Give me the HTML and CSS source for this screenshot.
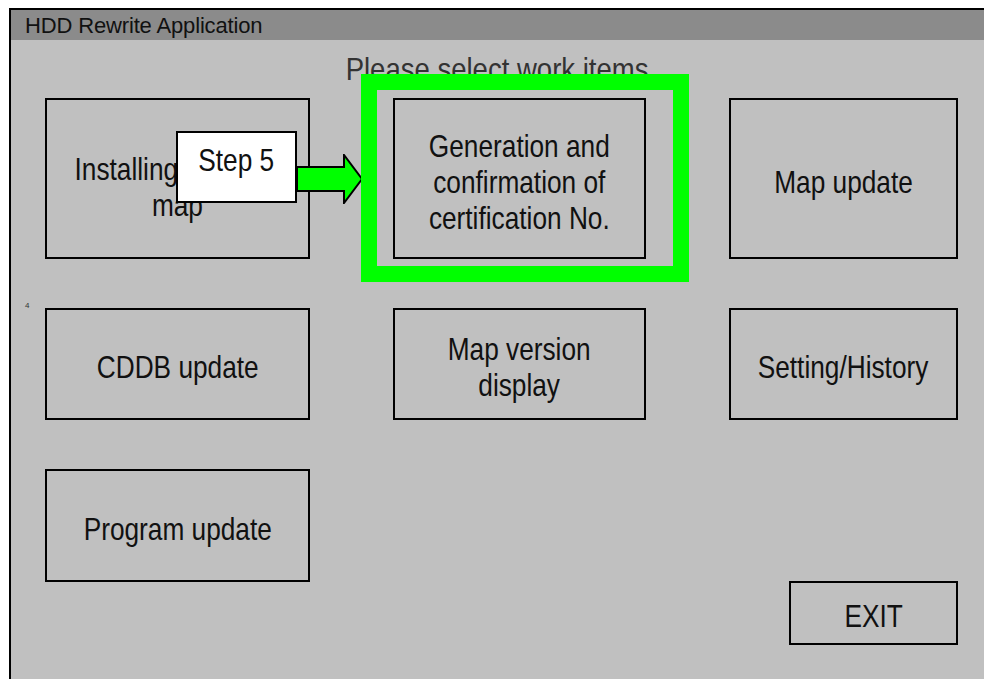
FILE: index.html
```html
<!DOCTYPE html>
<html lang="en">
<head>
  <meta charset="UTF-8">
  <title>HDD Rewrite Application</title>
  <link rel="stylesheet" href="styles.css">
</head>
<body>

<div class="window">
  <div class="title-bar">HDD Rewrite Application</div>

  <div class="content">
    <span class="page-no">4</span>
    <h1 class="prompt"><span class="narrow">Please select work items</span></h1>

    <div class="menu">
      <div class="item item-first">
        <span class="narrow">Installing updated<br>map</span>
        <!-- step callout -->
        <svg class="step-arrow" width="68" height="50" viewBox="0 0 68 50">
          <path d="M1 13 H48 V1 L66 25 L48 49 V37 H1 Z" fill="#00ff00" stroke="#000" stroke-width="2"/>
        </svg>
        <div class="step-label"><span class="narrow">Step 5</span></div>
      </div>
      <div class="item item-current"><span class="narrow">Generation and<br>confirmation of<br>certification No.</span></div>
      <div class="item"><span class="narrow">Map update</span></div>

      <div class="item"><span class="narrow">CDDB update</span></div>
      <div class="item"><span class="narrow">Map version<br>display</span></div>
      <div class="item"><span class="narrow">Setting/History</span></div>

      <div class="item"><span class="narrow">Program update</span></div>
    </div>

    <div class="footer">
      <div class="item exit"><span class="narrow">EXIT</span></div>
    </div>
  </div>
</div>

</body>
</html>
```

FILE: styles.css
```css
html, body { margin: 0; padding: 0; background: #fff; }
body {
  font-family: "Liberation Sans", Arial, sans-serif;
  color: #111;
  overflow: hidden;
}

/* the panel font is a condensed sans */
.narrow {
  display: inline-block;
  transform: scaleX(0.82);
  transform-origin: center;
  white-space: nowrap;
}

.window {
  margin: 8px 0 0 9px;
  border-top: 2px solid #000;
  border-left: 2px solid #000;
  background: #c0c0c0;
  height: 700px;
}

.title-bar {
  height: 30px;
  line-height: 31px;
  background: #8b8b8b;
  padding-left: 14px;
  font-size: 22px;
  letter-spacing: -0.15px;
  color: #111;
}

.content {
  position: relative;
  padding: 11px 0 0 34px;
}

.page-no {
  position: absolute;
  left: 14px;
  top: 261px;
  font-size: 8px;
  color: #333;
}

.prompt {
  margin: 0 0 11px -34px;
  height: 36px;
  line-height: 36px;
  font-size: 32px;
  font-weight: normal;
  text-align: center;
  color: #333;
}
.prompt .narrow { transform: scaleX(0.86); }

.menu {
  display: grid;
  grid-template-columns: 265px 253px 229px;
  grid-template-rows: 161px 112px 113px;
  column-gap: 83px;
  row-gap: 49px;
}

.item {
  position: relative;
  border: 2px solid #000;
  display: flex;
  align-items: center;
  justify-content: center;
  text-align: center;
  font-size: 32px;
  line-height: 36px;
  padding-top: 6px;
}

.item-first { padding-top: 16px; }

.item-current::after {
  content: "";
  position: absolute;
  left: -34px;
  top: -26px;
  right: -45px;
  bottom: -25px;
  border: 16px solid #00ff00;
}

.step-arrow {
  position: absolute;
  left: 249px;
  top: 54px;
}

.step-label {
  position: absolute;
  left: 129px;
  top: 31px;
  width: 117px;
  height: 59px;
  padding-top: 9px;
  background: #fff;
  border: 2px solid #000;
  line-height: 36px;
}

.footer {
  display: flex;
  justify-content: flex-end;
  width: 913px;
  margin-top: -1px;
}

.exit {
  width: 165px;
  height: 54px;
}
```
